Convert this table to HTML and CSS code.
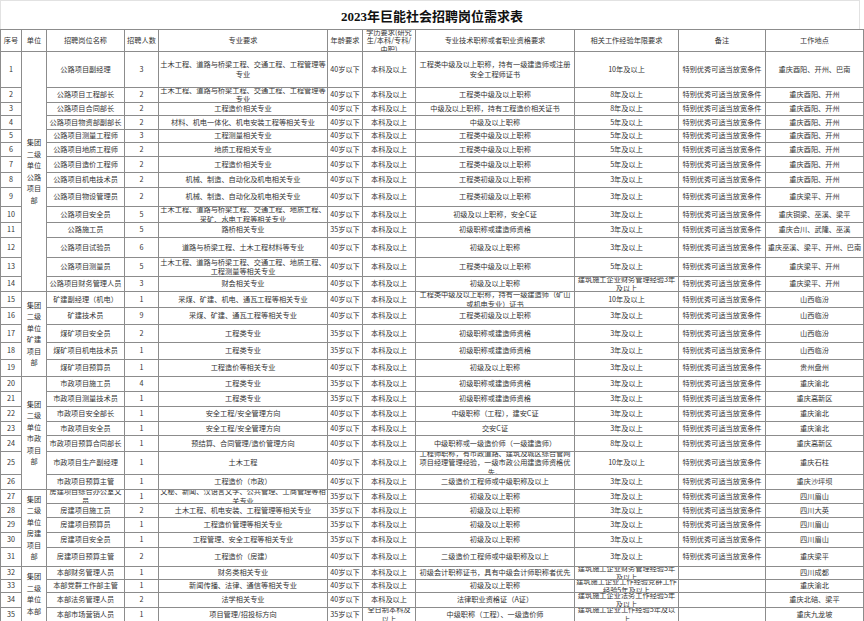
FILE: index.html
```html
<!DOCTYPE html>
<html lang="zh-CN">
<head>
<meta charset="utf-8">
<title>2023年巨能社会招聘岗位需求表</title>
<link rel="stylesheet" href="styles.css">
</head>
<body>
<div class="sheet">
  <div class="title">2023年巨能社会招聘岗位需求表</div>
  <div class="grid">
    <div class="c hd">序号</div><div class="c hd">单位</div><div class="c hd">招聘岗位名称</div><div class="c hd">招聘人数</div><div class="c hd">专业要求</div><div class="c hd">年龄要求</div><div class="c hd">学历要求(研究生/本科/专科/中职)</div><div class="c hd">专业技术职称或者职业资格要求</div><div class="c hd">相关工作经验年限要求</div><div class="c hd">备注</div><div class="c hd">工作地点</div>

    <div class="c">1</div><div class="c unit span14"><span>集团二级单位公路项目部</span></div><div class="c">公路项目副经理</div><div class="c">3</div><div class="c">土木工程、道路与桥梁工程、交通工程、工程管理等专业</div><div class="c">40岁以下</div><div class="c">本科及以上</div><div class="c">工程类中级及以上职称，持有一级建造师或注册安全工程师证书</div><div class="c">10年及以上</div><div class="c">特别优秀可适当放宽条件</div><div class="c">重庆酉阳、开州、巴南</div>
    <div class="c">2</div><div class="c">公路项目工程部长</div><div class="c">2</div><div class="c">土木工程、道路与桥梁工程、交通工程、工程管理等专业</div><div class="c">40岁以下</div><div class="c">本科及以上</div><div class="c">工程类中级及以上职称</div><div class="c">8年及以上</div><div class="c">特别优秀可适当放宽条件</div><div class="c">重庆酉阳、开州</div>
    <div class="c">3</div><div class="c">公路项目合同部长</div><div class="c">2</div><div class="c">工程造价相关专业</div><div class="c">40岁以下</div><div class="c">本科及以上</div><div class="c">中级及以上职称，持有工程造价相关证书</div><div class="c">8年及以上</div><div class="c">特别优秀可适当放宽条件</div><div class="c">重庆酉阳、开州</div>
    <div class="c">4</div><div class="c">公路项目物资部副部长</div><div class="c">2</div><div class="c">材料、机电一体化、机电安装工程等相关专业</div><div class="c">40岁以下</div><div class="c">本科及以上</div><div class="c">中级及以上职称</div><div class="c">5年及以上</div><div class="c">特别优秀可适当放宽条件</div><div class="c">重庆酉阳、开州</div>
    <div class="c">5</div><div class="c">公路项目测量工程师</div><div class="c">3</div><div class="c">工程测量相关专业</div><div class="c">40岁以下</div><div class="c">本科及以上</div><div class="c">工程类中级及以上职称</div><div class="c">5年及以上</div><div class="c">特别优秀可适当放宽条件</div><div class="c">重庆酉阳、开州</div>
    <div class="c">6</div><div class="c">公路项目地质工程师</div><div class="c">2</div><div class="c">地质工程相关专业</div><div class="c">40岁以下</div><div class="c">本科及以上</div><div class="c">工程类中级及以上职称</div><div class="c">5年及以上</div><div class="c">特别优秀可适当放宽条件</div><div class="c">重庆酉阳、开州</div>
    <div class="c">7</div><div class="c">公路项目造价工程师</div><div class="c">2</div><div class="c">工程造价相关专业</div><div class="c">40岁以下</div><div class="c">本科及以上</div><div class="c">工程类中级及以上职称</div><div class="c">5年及以上</div><div class="c">特别优秀可适当放宽条件</div><div class="c">重庆酉阳、开州</div>
    <div class="c">8</div><div class="c">公路项目机电技术员</div><div class="c">2</div><div class="c">机械、制造、自动化及机电相关专业</div><div class="c">40岁以下</div><div class="c">本科及以上</div><div class="c">工程类初级及以上职称</div><div class="c">3年及以上</div><div class="c">特别优秀可适当放宽条件</div><div class="c">重庆酉阳、开州</div>
    <div class="c">9</div><div class="c">公路项目物设管理员</div><div class="c">2</div><div class="c">机械、制造、自动化及机电相关专业</div><div class="c">40岁以下</div><div class="c">本科及以上</div><div class="c">工程类初级及以上职称</div><div class="c">3年及以上</div><div class="c">特别优秀可适当放宽条件</div><div class="c">重庆梁平、开州</div>
    <div class="c">10</div><div class="c">公路项目安全员</div><div class="c">5</div><div class="c">土木工程、道路与桥梁工程、交通工程、地质工程、采矿、水电工程等相关专业</div><div class="c">40岁以下</div><div class="c">本科及以上</div><div class="c">初级及以上职称，安全C证</div><div class="c">3年及以上</div><div class="c">特别优秀可适当放宽条件</div><div class="c">重庆铜梁、巫溪、梁平</div>
    <div class="c">11</div><div class="c">公路施工员</div><div class="c">5</div><div class="c">路桥相关专业</div><div class="c">35岁以下</div><div class="c">本科及以上</div><div class="c">初级职称或建造师资格</div><div class="c">3年及以上</div><div class="c">特别优秀可适当放宽条件</div><div class="c">重庆合川、武隆、巫溪</div>
    <div class="c">12</div><div class="c">公路项目试验员</div><div class="c">6</div><div class="c">道路与桥梁工程、土木工程材料等专业</div><div class="c">40岁以下</div><div class="c">本科及以上</div><div class="c">初级及以上职称</div><div class="c">3年及以上</div><div class="c">特别优秀可适当放宽条件</div><div class="c">重庆巫溪、梁平、开州、巴南</div>
    <div class="c">13</div><div class="c">公路项目测量员</div><div class="c">5</div><div class="c">土木工程、道路与桥梁工程、交通工程、地质工程、工程测量等相关专业</div><div class="c">40岁以下</div><div class="c">本科及以上</div><div class="c">工程类中级及以上职称</div><div class="c">5年及以上</div><div class="c">特别优秀可适当放宽条件</div><div class="c">重庆梁平、开州</div>
    <div class="c">14</div><div class="c">公路项目财务管理人员</div><div class="c">3</div><div class="c">财会相关专业</div><div class="c">40岁以下</div><div class="c">本科及以上</div><div class="c">初级及以上职称</div><div class="c">建筑施工企业财务管理经验3年及以上</div><div class="c">特别优秀可适当放宽条件</div><div class="c">重庆梁平、开州</div>

    <div class="c">15</div><div class="c unit span5"><span>集团二级单位矿建项目部</span></div><div class="c">矿建副经理（机电）</div><div class="c">1</div><div class="c">采煤、矿建、机电、通瓦工程等相关专业</div><div class="c">40岁以下</div><div class="c">本科及以上</div><div class="c">工程类中级及以上职称，持有一级建造师（矿山或机电专业）证书</div><div class="c">10年及以上</div><div class="c">特别优秀可适当放宽条件</div><div class="c">山西临汾</div>
    <div class="c">16</div><div class="c">矿建技术员</div><div class="c">9</div><div class="c">采煤、矿建、通瓦工程等相关专业</div><div class="c">40岁以下</div><div class="c">本科及以上</div><div class="c">工程类初级及以上职称</div><div class="c">3年及以上</div><div class="c">特别优秀可适当放宽条件</div><div class="c">山西临汾</div>
    <div class="c">17</div><div class="c">煤矿项目安全员</div><div class="c">2</div><div class="c">工程类专业</div><div class="c">35岁以下</div><div class="c">本科及以上</div><div class="c">初级职称或建造师资格</div><div class="c">3年及以上</div><div class="c">特别优秀可适当放宽条件</div><div class="c">山西临汾</div>
    <div class="c">18</div><div class="c">煤矿项目机电技术员</div><div class="c">1</div><div class="c">工程类专业</div><div class="c">35岁以下</div><div class="c">本科及以上</div><div class="c">初级职称或建造师资格</div><div class="c">3年及以上</div><div class="c">特别优秀可适当放宽条件</div><div class="c">山西临汾</div>
    <div class="c">19</div><div class="c">煤矿项目预算员</div><div class="c">1</div><div class="c">工程造价等相关专业</div><div class="c">40岁以下</div><div class="c">本科及以上</div><div class="c">初级及以上职称</div><div class="c">3年及以上</div><div class="c">特别优秀可适当放宽条件</div><div class="c">贵州盘州</div>

    <div class="c">20</div><div class="c unit span7"><span>集团二级单位市政项目部</span></div><div class="c">市政项目施工员</div><div class="c">4</div><div class="c">工程类专业</div><div class="c">35岁以下</div><div class="c">本科及以上</div><div class="c">初级职称或建造师资格</div><div class="c">3年及以上</div><div class="c">特别优秀可适当放宽条件</div><div class="c">重庆渝北</div>
    <div class="c">21</div><div class="c">市政项目测量技术员</div><div class="c">1</div><div class="c">工程类专业</div><div class="c">35岁以下</div><div class="c">本科及以上</div><div class="c">初级职称或建造师资格</div><div class="c">3年及以上</div><div class="c">特别优秀可适当放宽条件</div><div class="c">重庆高新区</div>
    <div class="c">22</div><div class="c">市政项目安全部长</div><div class="c">1</div><div class="c">安全工程/安全管理方向</div><div class="c">40岁以下</div><div class="c">本科及以上</div><div class="c">中级职称（工程），建安C证</div><div class="c">3年及以上</div><div class="c">特别优秀可适当放宽条件</div><div class="c">重庆渝北</div>
    <div class="c">23</div><div class="c">市政项目安全员</div><div class="c">1</div><div class="c">安全工程/安全管理方向</div><div class="c">40岁以下</div><div class="c">本科及以上</div><div class="c">交安C证</div><div class="c">3年及以上</div><div class="c">特别优秀可适当放宽条件</div><div class="c">重庆渝北</div>
    <div class="c">24</div><div class="c">市政项目预算合同部长</div><div class="c">1</div><div class="c">预结算、合同管理/造价管理方向</div><div class="c">40岁以下</div><div class="c">本科及以上</div><div class="c">中级职称或一级造价师（一级建造师）</div><div class="c">8年及以上</div><div class="c">特别优秀可适当放宽条件</div><div class="c">重庆高新区</div>
    <div class="c">25</div><div class="c">市政项目生产副经理</div><div class="c">1</div><div class="c">土木工程</div><div class="c">40岁以下</div><div class="c">本科及以上</div><div class="c">工程师职称，有市政道路、建筑及城区综合管网项目经理管理经验，一级市政公用建造师资格优先。</div><div class="c">10年及以上</div><div class="c">特别优秀可适当放宽条件</div><div class="c">重庆石柱</div>
    <div class="c">26</div><div class="c">市政项目预算主管</div><div class="c">1</div><div class="c">工程造价（市政）</div><div class="c">40岁以下</div><div class="c">本科及以上</div><div class="c">二级造价工程师或中级职称及以上</div><div class="c">3年及以上</div><div class="c">特别优秀可适当放宽条件</div><div class="c">重庆沙坪坝</div>

    <div class="c">27</div><div class="c unit span5"><span>集团二级单位房建项目部</span></div><div class="c">房建项目综合办公室文员</div><div class="c">1</div><div class="c">文秘、新闻、汉语言文学、公共管理、工商管理等相关专业</div><div class="c">35岁以下</div><div class="c">本科及以上</div><div class="c">初级及以上职称</div><div class="c">3年及以上</div><div class="c">特别优秀可适当放宽条件</div><div class="c">四川眉山</div>
    <div class="c">28</div><div class="c">房建项目施工员</div><div class="c">2</div><div class="c">土木工程、机电安装、工程管理等相关专业</div><div class="c">35岁以下</div><div class="c">本科及以上</div><div class="c">初级及以上职称</div><div class="c">3年及以上</div><div class="c">特别优秀可适当放宽条件</div><div class="c">四川大英</div>
    <div class="c">29</div><div class="c">房建项目预算员</div><div class="c">1</div><div class="c">工程造价管理等相关专业</div><div class="c">35岁以下</div><div class="c">本科及以上</div><div class="c">初级及以上职称</div><div class="c">3年及以上</div><div class="c">特别优秀可适当放宽条件</div><div class="c">四川眉山</div>
    <div class="c">30</div><div class="c">房建项目安全员</div><div class="c">1</div><div class="c">工程管理、安全工程等相关专业</div><div class="c">35岁以下</div><div class="c">本科及以上</div><div class="c">初级及以上职称</div><div class="c">3年及以上</div><div class="c">特别优秀可适当放宽条件</div><div class="c">四川眉山</div>
    <div class="c">31</div><div class="c">房建项目预算主管</div><div class="c">2</div><div class="c">工程造价（房建）</div><div class="c">40岁以下</div><div class="c">本科及以上</div><div class="c">二级造价工程师或中级职称及以上</div><div class="c">3年及以上</div><div class="c">特别优秀可适当放宽条件</div><div class="c">重庆梁平</div>

    <div class="c">32</div><div class="c unit span4"><span>集团二级单位本部</span></div><div class="c">本部财务管理人员</div><div class="c">1</div><div class="c">财务类相关专业</div><div class="c">40岁以下</div><div class="c">本科及以上</div><div class="c">初级会计职称证书，具有中级会计师职称者优先</div><div class="c">建筑施工企业财务管理经验5年及以上</div><div class="c"></div><div class="c">四川成都</div>
    <div class="c">33</div><div class="c">本部党群工作部主管</div><div class="c">1</div><div class="c">新闻传播、法律、通信等相关专业</div><div class="c">40岁以下</div><div class="c">本科及以上</div><div class="c">初级及以上职称</div><div class="c">建筑施工企业工作经验党群工作经验5年及以上</div><div class="c"></div><div class="c">重庆渝北</div>
    <div class="c">34</div><div class="c">本部法务管理人员</div><div class="c">2</div><div class="c">法学相关专业</div><div class="c">40岁以下</div><div class="c">本科及以上</div><div class="c">法律职业资格证（A证）</div><div class="c">建筑施工企业法务工作经验5年及以上</div><div class="c"></div><div class="c">重庆北碚、梁平</div>
    <div class="c">35</div><div class="c">本部市场营销人员</div><div class="c">1</div><div class="c">项目管理/招投标方向</div><div class="c">35岁以下</div><div class="c">全日制本科及以上</div><div class="c">中级职称（工程）、一级造价师</div><div class="c">建筑施工企业工作经验5年及以上</div><div class="c"></div><div class="c">重庆九龙坡</div>
  </div>
</div>
</body>
</html>
```

FILE: styles.css
```css
html, body {
  margin: 0;
  padding: 0;
  background: #fff;
}
body {
  width: 864px;
  height: 621px;
  overflow: hidden;
  font-family: "Noto Sans CJK SC", "Noto Sans", sans-serif;
  color: #333;
}
.sheet {
  width: 864px;
}
.title {
  height: 29px;
  border-top: 1px solid #e2e2e2;
  border-left: 1px solid #e2e2e2;
  border-right: 1px solid #e2e2e2;
  margin-right: 4px;
  display: flex;
  align-items: center;
  justify-content: center;
  font-family: "Liberation Serif", "Noto Sans CJK SC", serif;
  font-weight: bold;
  font-size: 13px;
  color: #111;
  padding-left: 4px;
  box-sizing: border-box;
}
.grid {
  display: grid;
  grid-template-columns: 20px 24px 77px 33px 168px 34px 52px 158px 103px 86px 97px;
  grid-template-rows:
    21px 35px 14px 12px 13px 12px 13px 15px 14px 18px 15px 14px 19px 18px 14px
    15px 16px 17px 16px 16px
    14px 14px 14px 13px 15px 22px 14px
    13px 13px 14px 14px 18px
    12px 12px 14px 13px;
  gap: 1px;
  padding: 1px;
  background: #8c8c8c;
  width: 864px;
  box-sizing: border-box;
}
.c {
  background: #fff;
  display: flex;
  align-items: center;
  justify-content: center;
  text-align: center;
  overflow: hidden;
  font-size: 7.2px;
  line-height: 9.5px;
  padding: 0 1px;
  min-width: 0;
  min-height: 0;
  word-break: break-all;
}
.hd {
  line-height: 8.5px;
}
.unit span {
  display: block;
  width: 15px;
  line-height: 11.5px;
}
.span14 { grid-row: span 14; }
.span7 { grid-row: span 7; }
.span5 { grid-row: span 5; }
.span4 { grid-row: span 4; }
```
